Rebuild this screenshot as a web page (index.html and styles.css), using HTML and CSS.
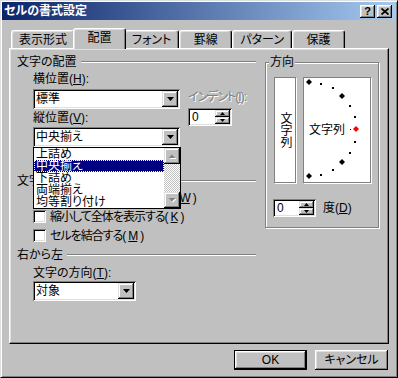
FILE: index.html
```html
<!DOCTYPE html>
<html lang="ja">
<head>
<meta charset="UTF-8">
<title>セルの書式設定</title>
<link rel="stylesheet" href="styles.css">
</head>
<body>

<div class="window">
  <div class="titlebar">
    <span class="title">セルの書式設定</span>
    <div class="title-btns">
      <span class="tbtn">?</span>
      <span class="tbtn"><svg width="8" height="7" viewBox="0 0 8 7"><path d="M0.5 0.5L7.5 6.5M7.5 0.5L0.5 6.5" stroke="#000" stroke-width="1.7"/></svg></span>
    </div>
  </div>

  <div class="dialog">
    <div class="tabs">
      <div class="tab">表示形式</div>
      <div class="tab active">配置</div>
      <div class="tab">フォント</div>
      <div class="tab">罫線</div>
      <div class="tab">パターン</div>
      <div class="tab">保護</div>
    </div>

    <div class="panel">
      <div class="col-left">
        <div class="group-head"><span>文字の配置</span><i class="rule"></i></div>
        <div class="align-row">
          <div class="align-fields">
            <div class="label">横位置(<u>H</u>):</div>
            <div class="combo">
              <span class="combo-text">標準</span>
              <span class="drop-btn"><svg width="7" height="4" viewBox="0 0 7 4"><path d="M0 0h7L3.5 4z"/></svg></span>
            </div>
            <div class="label label-v">縦位置(<u>V</u>):</div>
            <div class="combo combo-v">
              <span class="combo-text">中央揃え</span>
              <span class="drop-btn"><svg width="7" height="4" viewBox="0 0 7 4"><path d="M0 0h7L3.5 4z"/></svg></span>
              <div class="droplist">
                <ul class="items">
                  <li>上詰め</li>
                  <li class="selected">中央揃え</li>
                  <li>下詰め</li>
                  <li>両端揃え</li>
                  <li>均等割り付け</li>
                </ul>
                <div class="scroll">
                  <span class="sb-btn"><svg width="8" height="5" viewBox="0 0 8 5"><path d="M1.5 5h7L5 1.5z" fill="#fff"/><path d="M0.5 4h7L4 0.5z" fill="#808080"/></svg></span>
                  <span class="track"></span>
                  <span class="sb-btn"><svg width="8" height="5" viewBox="0 0 8 5"><path d="M1.5 1h7L5 4.5z" fill="#fff"/><path d="M0.5 0h7L4 3.5z" fill="#808080"/></svg></span>
                </div>
              </div>
            </div>
          </div>
          <div class="indent">
            <div class="label disabled">インデント(<u>I</u>):</div>
            <div class="spin">
              <span class="spin-val">0</span>
              <span class="spin-btns">
                <i><svg width="5" height="3" viewBox="0 0 5 3"><path d="M0 3h5L2.5 0z"/></svg></i>
                <i><svg width="5" height="3" viewBox="0 0 5 3"><path d="M0 0h5L2.5 3z"/></svg></i>
              </span>
            </div>
          </div>
        </div>

        <div class="group-head head-control"><span>文字の制御</span><i class="rule"></i></div>
        <div class="checks">
          <div class="check"><i class="box"></i>折り返して全体を表示する(<u>W</u>)</div>
          <div class="check"><i class="box"></i>縮小して全体を表示する(<u>K</u>)</div>
          <div class="check"><i class="box"></i>セルを結合する(<u>M</u>)</div>
        </div>

        <div class="group-head head-rtl"><span>右から左</span><i class="rule"></i></div>
        <div class="sub">
          <div class="label label-dir">文字の方向(<u>T</u>):</div>
          <div class="combo combo-short">
            <span class="combo-text">対象</span>
            <span class="drop-btn"><svg width="7" height="4" viewBox="0 0 7 4"><path d="M0 0h7L3.5 4z"/></svg></span>
          </div>
        </div>
      </div>

      <fieldset class="orient">
        <legend>方向</legend>
        <div class="orient-boxes">
          <div class="vbox"><span>文字列</span></div>
          <div class="dial">
            <svg class="dial-marks" width="66" height="104" viewBox="0 0 66 104">
              <g fill="#000">
                <path d="M5 1l3 3-3 3-3-3z"/>
                <rect x="16" y="5" width="2" height="2"/>
                <rect x="28" y="9" width="2" height="2"/>
                <path d="M38 15l3 3-3 3-3-3z"/>
                <rect x="45" y="27" width="2" height="2"/>
                <rect x="50" y="38" width="2" height="2"/>
                <rect x="46" y="51" width="1" height="1"/>
                <rect x="50" y="63" width="2" height="2"/>
                <rect x="45" y="74" width="2" height="2"/>
                <path d="M38 81l3 3-3 3-3-3z"/>
                <rect x="28" y="91" width="2" height="2"/>
                <rect x="16" y="96" width="2" height="2"/>
                <path d="M5 95l3 3-3 3-3-3z"/>
              </g>
              <path d="M52 48l3 3-3 3-3-3z" fill="#f00"/>
            </svg>
            <span class="dial-text">文字列</span>
          </div>
        </div>
        <div class="degree">
          <div class="spin spin-deg">
            <span class="spin-val">0</span>
            <span class="spin-btns">
              <i><svg width="5" height="3" viewBox="0 0 5 3"><path d="M0 3h5L2.5 0z"/></svg></i>
              <i><svg width="5" height="3" viewBox="0 0 5 3"><path d="M0 0h5L2.5 3z"/></svg></i>
            </span>
          </div>
          <span>度(<u>D</u>)</span>
        </div>
      </fieldset>
    </div>

    <div class="buttons">
      <button class="btn default">OK</button>
      <button class="btn">キャンセル</button>
    </div>
  </div>
</div>

</body>
</html>
```

FILE: styles.css
```css
body {
  margin: 0;
  background-color: #c0c0c0;
  font-family: "Liberation Sans", "Noto Sans CJK JP", sans-serif;
  font-size: 12px;
  line-height: 14px;
  color: #000;
  font-feature-settings: "palt";
}
.window {
  box-sizing: border-box;
  width: 398px;
  height: 378px;
  border: 1px solid;
  border-color: #dfdfdf #000 #000 #dfdfdf;
  box-shadow: inset 1px 1px #fff, inset -1px -1px #808080;
  padding: 1px;
  background-color: #c0c0c0;
}
.titlebar {
  height: 18px;
  display: flex;
  align-items: center;
  justify-content: space-between;
  padding: 0 4px 0 2px;
  background: linear-gradient(to right, #0a246a, #a6caf0);
}
.title {
  color: #fff;
  font-weight: bold;
}
.title-btns {
  display: flex;
  gap: 2px;
}
.tbtn {
  box-sizing: border-box;
  width: 15px;
  height: 13px;
  display: flex;
  align-items: center;
  justify-content: center;
  background-color: #c0c0c0;
  box-shadow: inset -1px -1px #000, inset 1px 1px #fff, inset -2px -2px #808080, inset 2px 2px #dfdfdf;
  font: bold 11px/1 "Liberation Sans", sans-serif;
}
.dialog {
  padding: 8px 7px 0;
}

/* tabs */
.tabs {
  display: flex;
  align-items: flex-end;
  height: 20px;
  padding-left: 2px;
}
.tab {
  height: 16px;
  min-width: 37px;
  padding: 1px 7px 0;
  line-height: 16px;
  text-align: center;
  border: 1px solid;
  border-bottom: 0;
  border-color: #fff #000 transparent #fff;
  border-radius: 3px 3px 0 0;
  box-shadow: inset -1px 0 #808080, inset 1px 1px #dfdfdf;
}
.tab.active {
  height: 19px;
  line-height: 17px;
  margin: 0 -2px -1px;
  position: relative;
  z-index: 1;
  background-color: #c0c0c0;
}
.panel {
  box-sizing: border-box;
  height: 296px;
  border: 1px solid;
  border-color: #fff #000 #000 #fff;
  box-shadow: inset -1px -1px #808080, inset 1px 1px #dfdfdf;
  padding: 6px 9px 0 7px;
  display: grid;
  grid-template-columns: 239px 114px;
  column-gap: 9px;
  align-items: start;
}

/* left column */
.group-head {
  display: flex;
  align-items: center;
  gap: 4px;
  height: 14px;
}
.rule {
  flex: 1;
  border-top: 1px solid #808080;
  border-bottom: 1px solid #fff;
}
.head-control {
  margin-top: 27px;
}
.head-rtl {
  margin-top: 3px;
}
.label {
  height: 14px;
  white-space: nowrap;
}
.label.disabled {
  color: #808080;
  text-shadow: 1px 1px #fff;
  letter-spacing: -1px;
}
.align-row {
  display: flex;
  gap: 8px;
  margin: 3px 0 0 16px;
}
.align-fields {
  width: 147px;
}
.align-fields .combo {
  margin-top: 3px;
}
.label-v {
  margin-top: 2px;
}
.align-fields .combo-v {
  margin-top: 2px;
}
.indent {
  padding-top: 18px;
}
.indent .spin {
  margin-top: 4px;
}
.combo {
  box-sizing: border-box;
  height: 20px;
  padding: 2px;
  display: flex;
  align-items: center;
  position: relative;
  background-color: #fff;
  box-shadow: inset 1px 1px #808080, inset -1px -1px #fff, inset 2px 2px #000, inset -2px -2px #dfdfdf;
}
.combo-text {
  flex: 1;
  padding-left: 1px;
  white-space: nowrap;
}
.drop-btn,
.sb-btn,
.spin-btns i {
  display: flex;
  align-items: center;
  justify-content: center;
  background-color: #c0c0c0;
  box-shadow: inset -1px -1px #000, inset 1px 1px #dfdfdf, inset -2px -2px #808080, inset 2px 2px #fff;
}
.drop-btn {
  width: 16px;
  height: 16px;
}
.drop-btn svg {
  display: block;
}

/* open dropdown list */
.droplist {
  position: absolute;
  top: 100%;
  left: 0;
  width: 148px;
  height: 62px;
  box-sizing: border-box;
  border: 1px solid #000;
  background-color: #fff;
  display: flex;
  z-index: 2;
}
.items {
  flex: 1;
  list-style: none;
  margin: 0;
  padding: 0;
}
.items li {
  height: 12px;
  line-height: 12px;
  padding-left: 2px;
  white-space: nowrap;
}
.items li.selected {
  background-color: #000080;
  color: #fff;
  outline: 1px dotted #fff;
  outline-offset: -1px;
}
.scroll {
  width: 16px;
  display: flex;
  flex-direction: column;
}
.sb-btn {
  height: 16px;
}
.track {
  flex: 1;
  background: repeating-conic-gradient(#fff 0 25%, #c0c0c0 0 50%) 0 0 / 2px 2px;
}

/* spinner */
.spin {
  box-sizing: border-box;
  width: 44px;
  height: 18px;
  padding: 2px;
  display: flex;
  background-color: #fff;
  box-shadow: inset 1px 1px #808080, inset -1px -1px #fff, inset 2px 2px #000, inset -2px -2px #dfdfdf;
}
.spin-val {
  flex: 1;
  padding-left: 2px;
  line-height: 14px;
}
.spin-btns {
  width: 15px;
  display: flex;
  flex-direction: column;
}
.spin-btns i {
  flex: 1;
}
.spin-btns svg {
  display: block;
}

/* checkboxes */
.checks {
  margin-left: 16px;
}
.check {
  display: flex;
  align-items: center;
  gap: 3px;
  height: 19px;
  white-space: nowrap;
  letter-spacing: -1px;
}
.box {
  width: 13px;
  height: 13px;
  margin-right: 1px;
  background-color: #fff;
  box-shadow: inset 1px 1px #808080, inset -1px -1px #fff, inset 2px 2px #000, inset -2px -2px #dfdfdf;
}
.sub {
  margin-left: 16px;
}
.label-dir {
  margin-top: 4px;
}
.combo-short {
  width: 103px;
  margin-top: 1px;
}

/* orientation group */
.orient {
  margin: 0;
  min-width: 0;
  padding: 8px 7px 10px 8px;
  border: 1px solid #808080;
  box-shadow: inset 1px 1px #fff, 1px 1px #fff;
}
.orient legend {
  margin-left: -5px;
  padding: 0 1px;
  line-height: 14px;
  background-color: #c0c0c0;
}
.orient-boxes {
  display: flex;
  gap: 7px;
  height: 106px;
}
.vbox {
  box-sizing: border-box;
  width: 22px;
  display: flex;
  align-items: center;
  justify-content: center;
  background-color: #fff;
  border: 1px solid #808080;
  box-shadow: 1px 1px #fff;
}
.vbox span {
  writing-mode: vertical-rl;
  text-orientation: upright;
  line-height: 12px;
}
.dial {
  box-sizing: border-box;
  width: 68px;
  padding-left: 5px;
  display: flex;
  align-items: center;
  position: relative;
  background-color: #fff;
  border: 1px solid #808080;
  box-shadow: 1px 1px #fff;
}
.dial-marks {
  position: absolute;
  top: 0;
  left: 0;
}
.dial-text {
  position: relative;
}
.degree {
  display: flex;
  align-items: center;
  gap: 7px;
  margin: 16px 0 0 -1px;
}
.spin-deg {
  width: 43px;
}

/* buttons */
.buttons {
  display: flex;
  justify-content: flex-end;
  gap: 8px;
  margin-top: 6px;
  padding-right: 1px;
}
.btn {
  box-sizing: border-box;
  width: 73px;
  height: 20px;
  padding: 0;
  border: 0;
  background-color: #c0c0c0;
  box-shadow: inset -1px -1px #000, inset 1px 1px #fff, inset -2px -2px #808080, inset 2px 2px #dfdfdf;
  font: inherit;
  color: #000;
}
.btn.default {
  border: 1px solid #000;
}
```
